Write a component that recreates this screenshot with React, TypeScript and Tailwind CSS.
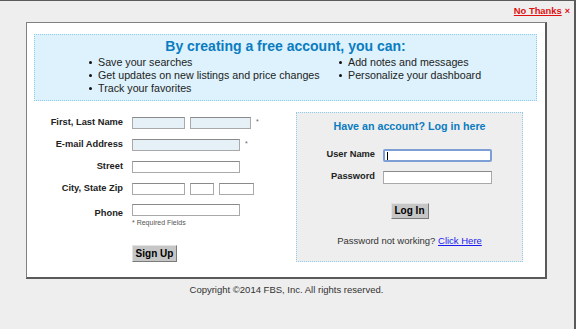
import type { ReactNode } from "react";

const font = "font-['Liberation_Sans',Arial,sans-serif]";

const inputBase = "block h-[12px] border border-[#a9a9a9] border-t-[#8a8a8a]";
const inputReq = `${inputBase} bg-[#e6f0f7]`;
const inputPlain = `${inputBase} bg-white`;

const buttonClass =
  "flex items-center justify-center bg-[#c6c6c6] border border-[#e2e2e2] border-r-[#7a7a7a] border-b-[#7a7a7a] text-[10px] font-bold text-black leading-none";

function Bullet({ children }: { children: ReactNode }) {
  return (
    <li className="flex items-center h-[13px]">
      <span className="w-[3px] h-[3px] rounded-full bg-[#111] ml-[3px] mr-[6px]" />
      <span>{children}</span>
    </li>
  );
}

function FormRow({ label, children }: { label: string; children: ReactNode }) {
  return (
    <div className="flex items-center h-[22px]">
      <div className="w-[89px] text-right text-[9.3px] font-bold text-[#222]">{label}</div>
      <div className="ml-[9px] flex items-center gap-[5px]">{children}</div>
    </div>
  );
}

function Star() {
  return <span className="text-[7px] text-[#666] -mt-[2px]">*</span>;
}

export default function App() {
  return (
    <div className={`${font} w-[576px] h-[329px] bg-[#eeeeee] border-t border-r-2 border-[#5a5a5a] overflow-hidden`}>
      <div className="h-[21px] flex items-center justify-end pr-[4px]">
        <a href="#" className="text-[9.4px] font-bold text-[#e01010] underline">
          No Thanks
        </a>
        <span className="ml-[3px] text-[9px] font-bold text-[#e01010]">×</span>
      </div>

      <div className="ml-[26px] w-[521px] h-[257px] bg-white border border-[#808080] border-r-2 border-b-2 border-r-[#5a5a5a] border-b-[#5a5a5a] pt-[11px] pl-[7px]">
        <div className="w-[503px] h-[67px] bg-[#ddf2fc] border border-dotted border-[#8ecbea] pt-[2px]">
          <h2 className="text-center text-[14px] font-bold text-[#0a7cc0] leading-[18px]">
            By creating a free account, you can:
          </h2>
          <div className="flex text-[10.7px] text-[#222] mt-[1px]">
            <ul className="ml-[51px] w-[250px]">
              <Bullet>Save your searches</Bullet>
              <Bullet>Get updates on new listings and price changes</Bullet>
              <Bullet>Track your favorites</Bullet>
            </ul>
            <ul>
              <Bullet>Add notes and messages</Bullet>
              <Bullet>Personalize your dashboard</Bullet>
            </ul>
          </div>
        </div>

        <div className="flex mt-[11px]">
          <div className="w-[262px]">
            <FormRow label="First, Last Name">
              <span className={`${inputReq} w-[53px]`} />
              <span className={`${inputReq} w-[61px]`} />
              <Star />
            </FormRow>
            <FormRow label="E-mail Address">
              <span className={`${inputReq} w-[108px]`} />
              <Star />
            </FormRow>
            <FormRow label="Street">
              <span className={`${inputPlain} w-[108px]`} />
            </FormRow>
            <FormRow label="City, State Zip">
              <span className={`${inputPlain} w-[53px]`} />
              <span className={`${inputPlain} w-[24px]`} />
              <span className={`${inputPlain} w-[35px]`} />
            </FormRow>
            <div className="flex items-center">
              <div className="w-[89px] text-right text-[9.3px] font-bold text-[#222]">Phone</div>
              <div className="ml-[9px] pt-[4px]">
                <span className={`${inputPlain} w-[108px]`} />
                <div className="mt-[2px] leading-[9px] text-[7px] text-[#555]">* Required Fields</div>
              </div>
            </div>
            <div className="ml-[98px] mt-[18px]">
              <button type="button" className={`${buttonClass} w-[45px] h-[17px]`}>
                Sign Up
              </button>
            </div>
          </div>

          <div className="w-[227px] h-[150px] bg-[#eeeeee] border border-dotted border-[#8ecbea] pt-[6px]">
            <h3 className="text-center text-[10.7px] font-bold text-[#0a7cc0] leading-[14px]">
              Have an account? Log in here
            </h3>
            <div className="mt-[11px]">
              <div className="flex items-center h-[22px]">
                <div className="w-[78px] text-right text-[9.3px] font-bold text-[#222]">User Name</div>
                <span className="ml-[8px] block w-[109px] h-[13px] bg-white border-2 border-[#7d9fd6] rounded-[2px] relative">
                  <span className="absolute left-[2px] top-[1px] w-[1px] h-[8px] bg-black" />
                </span>
              </div>
              <div className="flex items-center h-[22px]">
                <div className="w-[78px] text-right text-[9.3px] font-bold text-[#222]">Password</div>
                <span className={`ml-[8px] ${inputPlain} w-[109px] h-[13px]`} />
              </div>
            </div>
            <div className="flex justify-center mt-[15px]">
              <button type="button" className={`${buttonClass} w-[38px] h-[16px]`}>
                Log In
              </button>
            </div>
            <p className="mt-[16px] text-center text-[9.5px] leading-[12px] text-[#333]">
              Password not working?{" "}
              <a href="#" className="text-[#1a1aee] underline">
                Click Here
              </a>
            </p>
          </div>
        </div>
      </div>

      <p className="mt-[5px] ml-[26px] w-[521px] text-center text-[9.5px] leading-[12px] text-[#333]">
        Copyright ©2014 FBS, Inc. All rights reserved.
      </p>
    </div>
  );
}
